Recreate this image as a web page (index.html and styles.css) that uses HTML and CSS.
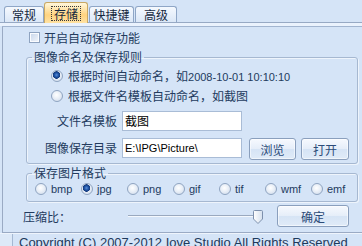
FILE: index.html
```html
<!DOCTYPE html>
<html>
<head>
<meta charset="utf-8">
<link rel="stylesheet" href="styles.css">
</head>
<body>
<div class="win">
  <div class="tabbar">
    <div class="tab t1">常规</div>
    <div class="tab active"><span class="focus">存储</span></div>
    <div class="tab t3">快捷键</div>
    <div class="tab t4">高级</div>
  </div>
  <div class="band"></div>
  <div class="panel">
    <div class="chkrow"><span class="chk"></span><span>开启自动保存功能</span></div>
    <fieldset class="grp g1">
      <legend>图像命名及保存规则</legend>
      <div class="radrow first"><span class="rad on"></span><span>根据时间自动命名，如<span class="en">2008-10-01 10:10:10</span></span></div>
      <div class="radrow"><span class="rad"></span><span>根据文件名模板自动命名，如截图</span></div>
      <div class="field r1"><span class="lbl">文件名模板</span><span class="inp">截图</span></div>
      <div class="field r2"><span class="lbl">图像保存目录</span><span class="inp en">E:\IPG\Picture\</span><span class="btn b1">浏览</span><span class="btn b2">打开</span></div>
    </fieldset>
    <fieldset class="grp g2">
      <legend>保存图片格式</legend>
      <div class="fmts">
        <span class="fmt"><span class="rad"></span><span class="en">bmp</span></span>
        <span class="fmt"><span class="rad on"></span><span class="en">jpg</span></span>
        <span class="fmt"><span class="rad"></span><span class="en">png</span></span>
        <span class="fmt"><span class="rad"></span><span class="en">gif</span></span>
        <span class="fmt"><span class="rad"></span><span class="en">tif</span></span>
        <span class="fmt"><span class="rad"></span><span class="en">wmf</span></span>
        <span class="fmt"><span class="rad"></span><span class="en">emf</span></span>
      </div>
    </fieldset>
    <div class="ratio">
      <span class="rlbl">压缩比：</span>
      <div class="slider">
        <span class="track"></span>
        <svg class="thumb" width="10" height="14" viewBox="0 0 10 14">
          <defs>
            <linearGradient id="tg" x1="0" y1="0" x2="1" y2="0">
              <stop offset="0" stop-color="#ffffff"/>
              <stop offset="1" stop-color="#d5e0ee"/>
            </linearGradient>
          </defs>
          <path d="M1.5 0.5 H8.5 Q9.5 0.5 9.5 1.5 V9 L5 13.5 L0.5 9 V1.5 Q0.5 0.5 1.5 0.5 Z" fill="url(#tg)" stroke="#7d90ad"/>
        </svg>
      </div>
      <span class="btn ok">确定</span>
    </div>
  </div>
  <div class="status"><span class="cell"></span><span class="copy">Copyright (C) 2007-2012 Iove Studio All Rights Reserved</span></div>
</div>
</body>
</html>
```
FILE: styles.css
```css
* { box-sizing: border-box; }
html, body { margin: 0; padding: 0; }
body {
  width: 362px;
  height: 246px;
  overflow: hidden;
  background: #d5e4f7;
  font-family: "Noto Sans CJK SC", "Liberation Sans", sans-serif;
  font-size: 12px;
  color: #233b5e;
}
.en { font-family: "Liberation Sans", "Noto Sans CJK SC", sans-serif; font-size: 11px; }

.tabbar {
  display: flex;
  align-items: flex-end;
  height: 23px;
  padding-left: 4px;
  border-bottom: 1px solid #97a9c4;
}
.tab {
  height: 16px;
  display: flex;
  align-items: center;
  justify-content: center;
  border: 1px solid #8fa6c6;
  border-bottom: none;
  border-radius: 3px 3px 0 0;
  background: linear-gradient(#f5f9fe, #dbe7f7);
  color: #15283f;
  line-height: 14px;
}
.t1 { width: 40px; }
.t3 { width: 45px; margin-left: 1px; }
.t4 { width: 42px; margin-left: 1px; }
.active {
  width: 44px;
  height: 21px;
  margin-bottom: -1px;
  border-color: #c9a863;
  background: linear-gradient(#fff7dc, #ffe3a6 35%, #ffd37f 60%, #ffe2a3);
}
.focus {
  display: block;
  border: 1px dotted #3a3a3a;
  padding: 0 2px;
  line-height: 13px;
  margin-top: 1px;
}
.band { height: 3px; background: #eaf2fd; }

.panel {
  margin-left: 2px;
  height: 207px;
  border-top: 1px solid #a2b5d0;
  border-left: 1px solid #9aaac4;
  border-bottom: 1px solid #9aaac4;
}
.chkrow {
  display: flex;
  align-items: center;
  gap: 4px;
  height: 20px;
  margin-left: 26px;
}
.chk {
  width: 11px;
  height: 11px;
  flex: none;
  border: 1px solid #8ea3c0;
  background: linear-gradient(135deg, #c6d5ea, #f3f7fc);
  box-shadow: inset 0 0 0 1px #fafcff;
}

.grp {
  margin: 2px 0 0 23px;
  padding: 0 0 3px 0;
  width: 332px;
  min-width: 0;
  border: 1px solid #a6b8d1;
  border-radius: 3px;
  box-shadow: 1px 1px 0 #eef4fc, inset 1px 1px 0 #eef4fc;
}
.grp legend {
  margin-left: 5px;
  padding: 0 2px;
  height: 16px;
  line-height: 16px;
}
.g2 { margin-top: 1px; padding-bottom: 4px; }

.radrow {
  display: flex;
  align-items: center;
  gap: 5px;
  height: 20px;
  padding-left: 24px;
  line-height: 16px;
}
.radrow.first { margin-top: 1px; }
.rad {
  width: 12px;
  height: 12px;
  flex: none;
  border-radius: 50%;
  border: 1px solid #8fa4c1;
  background: radial-gradient(circle at 45% 40%, #ffffff 0, #e9eff7 45%, #c9d6e8 100%);
}
.rad.on {
  background:
    radial-gradient(circle at 45% 40%, #5b8fd6 0, #1f55a8 2px, #14397a 3.5px, transparent 4px),
    radial-gradient(circle at 45% 40%, #ffffff 0, #e9eff7 45%, #c9d6e8 100%);
}

.field { display: flex; align-items: flex-start; }
.r1 { margin-top: 5px; height: 20px; }
.r2 { margin-top: 7px; height: 22px; }
.lbl {
  width: 90px;
  margin-right: 5px;
  text-align: right;
  height: 20px;
  line-height: 20px;
}
.inp {
  width: 120px;
  height: 20px;
  border: 1px solid #a9bcd6;
  background: #ffffff;
  color: #000000;
  padding-left: 2px;
  line-height: 18px;
}
.btn {
  display: flex;
  align-items: center;
  justify-content: center;
  height: 22px;
  border: 1px solid #8a9fbd;
  border-radius: 3px;
  background: linear-gradient(#f6f9fe, #e6eef9 48%, #d6e4f5 52%, #e0ebf8);
  box-shadow: inset 0 0 0 1px rgba(255, 255, 255, 0.55);
  color: #2c4b78;
}
.b1 { width: 47px; margin-left: 7px; }
.b2 { width: 48px; margin-left: 5px; }

.fmts {
  display: flex;
  align-items: center;
  height: 16px;
  padding-left: 8px;
}
.fmt {
  width: 46px;
  display: flex;
  align-items: center;
  gap: 4px;
  flex: none;
}

.ratio {
  display: flex;
  align-items: center;
  height: 22px;
  margin-top: 3px;
}
.rlbl { width: 105px; margin-left: 20px; }
.slider { display: flex; align-items: center; }
.track {
  width: 125px;
  height: 2px;
  border-top: 1px solid #9aa9bf;
  border-bottom: 1px solid #f4f8fd;
}
.thumb { display: block; margin-top: 1px; }
.ok { width: 72px; margin-left: 14px; }

.status {
  display: flex;
  height: 13px;
  border-top: 1px solid #eef4fc;
}
.cell {
  width: 13px;
  border-right: 1px solid #a5b8d2;
  background: #dde9f8;
}
.copy {
  font-family: "Liberation Sans", sans-serif;
  font-size: 13px;
  line-height: 15px;
  padding-left: 6px;
  padding-top: 1px;
  color: #1e395b;
  white-space: nowrap;
}
```
